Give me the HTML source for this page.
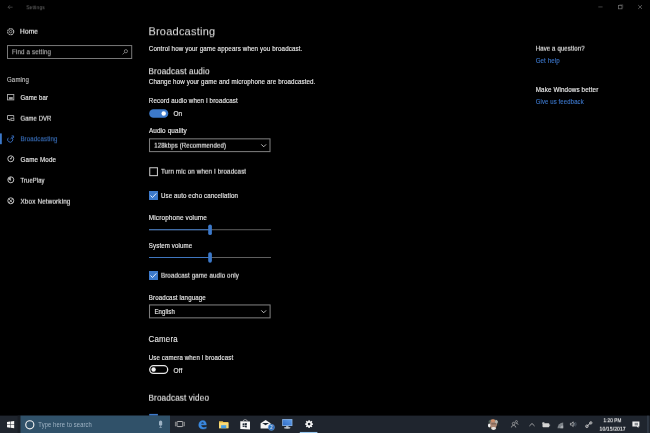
<!DOCTYPE html>
<html lang="en">
<head>
<meta charset="utf-8">
<title>Settings - Broadcasting</title>
<style>
html,body{margin:0;padding:0;background:#000;}
body{width:650px;height:433px;position:relative;overflow:hidden;font-family:"Liberation Sans",sans-serif;}
.t{position:absolute;left:0;top:0;white-space:pre;font-family:"Liberation Sans",sans-serif;transform-origin:0 0;will-change:transform;-webkit-text-stroke-color:currentColor;letter-spacing:0.02em;}
.abs{position:absolute;}
.box{position:absolute;box-sizing:border-box;}
svg{position:absolute;overflow:visible;}
</style>
</head>
<body>
<header>
<!-- title bar -->
<svg style="left:7px;top:4px" width="8" height="7" viewBox="0 0 8 7"><path d="M2.9 1.3 L1 3.2 L2.9 5.1 M1 3.2 H5.6" fill="none" stroke="#505050" stroke-width="0.75"/></svg>
<svg style="left:596px;top:2px" width="50" height="10" viewBox="596 2 50 10"><path d="M598.3 6.95 H602.6" stroke="#505050" stroke-width="0.8" fill="none"/><rect x="618.6" y="5.4" width="3.4" height="3.4" fill="none" stroke="#6c6c6c" stroke-width="0.8"/><path d="M619.6 5 V4.6 H622.8 V7.8 H622.4" fill="none" stroke="#4a4a4a" stroke-width="0.5"/><path d="M638.2 5.1 L642 8.9 M642 5.1 L638.2 8.9" stroke="#707070" stroke-width="0.75" fill="none"/></svg>
<span class="t" style="font-size:54px;line-height:82.58px;padding-left:2.19px;transform:translate(26px,3.25px) scale(0.09127,0.1) rotate(0.0001deg);color:#626262;-webkit-text-stroke-width:0.50px">Settings</span>
</header>
<nav>
<!-- sidebar -->
<svg style="left:6.8px;top:27.8px" width="7.4" height="7.4" viewBox="0 0 7.4 7.4"><circle cx="3.7" cy="3.7" r="3.05" fill="none" stroke="#b4b4b4" stroke-width="1.1" stroke-dasharray="1.9 0.5"/><circle cx="3.7" cy="3.7" r="1.25" fill="none" stroke="#b4b4b4" stroke-width="0.7"/></svg>
<svg style="left:6px;top:44px" width="128" height="16" viewBox="0 0 128 16"><rect x="1.5" y="1.55" width="124.2" height="12.95" fill="none" stroke="#787878" stroke-width="1"/></svg>
<svg style="left:122.2px;top:48.9px" width="6" height="6" viewBox="0 0 6 6"><circle cx="3.9" cy="2.2" r="1.6" fill="none" stroke="#a0a0a0" stroke-width="0.7"/><path d="M2.7 3.4 L0.6 5.4" stroke="#a0a0a0" stroke-width="0.7"/></svg>

<!-- nav icons -->
<svg style="left:6.8px;top:93.9px" width="7.4" height="6.4" viewBox="0 0 7.4 6.4"><rect x="0.5" y="0.5" width="6.3" height="5.4" fill="none" stroke="#ababab" stroke-width="0.9"/><rect x="1.9" y="3.1" width="3.9" height="2.4" fill="#a0a0a0"/></svg>
<svg style="left:6.9px;top:115px" width="7.4" height="6.4" viewBox="0 0 7.4 6.4"><path d="M3.4 4.5 H0.5 V0.5 H6.7 V2.6" fill="none" stroke="#b4b4b4" stroke-width="0.9"/><rect x="4" y="3.2" width="2.9" height="2.2" fill="none" stroke="#b4b4b4" stroke-width="0.8"/><path d="M2 5.7 H3.4" stroke="#a0a0a0" stroke-width="0.7"/></svg>
<svg style="left:0;top:133px" width="3" height="12" viewBox="0 0 3 12"><rect x="0" y="0.4" width="1.8" height="10.8" fill="#3c79ca"/></svg>
<svg style="left:6.9px;top:134.8px" width="7.4" height="7.8" viewBox="0 0 7.4 7.8"><circle cx="3.2" cy="4.6" r="2.6" fill="none" stroke="#3468b4" stroke-width="0.9" stroke-dasharray="12.4 4" transform="rotate(-55 3.2 4.6)"/><path d="M3.3 4.4 L6.4 1.2 M4.6 0.9 H6.6 V3" fill="none" stroke="#3468b4" stroke-width="0.9"/></svg>
<svg style="left:6.5px;top:155.4px" width="7.6" height="7.6" viewBox="0 0 7.6 7.6"><circle cx="3.8" cy="3.8" r="3" fill="none" stroke="#c0c0c0" stroke-width="1"/><path d="M3.8 3.8 L5 2" stroke="#c0c0c0" stroke-width="0.9"/><circle cx="3.8" cy="3.8" r="0.8" fill="#c0c0c0"/></svg>
<svg style="left:6.6px;top:176.4px" width="7.6" height="7.6" viewBox="0 0 7.6 7.6"><circle cx="3.8" cy="3.8" r="3" fill="none" stroke="#c0c0c0" stroke-width="1"/><path d="M1.2 3 L3.8 4.4 L3.4 1" fill="#c0c0c0" stroke="#c0c0c0" stroke-width="0.6"/></svg>
<svg style="left:6.6px;top:197.3px" width="7.6" height="7.6" viewBox="0 0 7.6 7.6"><circle cx="3.8" cy="3.8" r="3" fill="none" stroke="#c0c0c0" stroke-width="1"/><path d="M1.8 1.8 L5.8 6 M5.8 1.8 L1.8 6" stroke="#c0c0c0" stroke-width="0.9"/></svg>
<span class="t" style="font-size:70px;line-height:91.49px;padding-left:1.08px;transform:translate(20px,26.75px) scale(0.09271,0.1) rotate(0.0001deg);color:#f4f4f4;-webkit-text-stroke-width:1.50px">Home</span>
<span class="t" style="font-size:70px;line-height:91.49px;padding-left:0.00px;transform:translate(12px,47.25px) scale(0.08895,0.1) rotate(0.0001deg);color:#b8b8b8;-webkit-text-stroke-width:1.00px">Find a setting</span>
<span class="t" style="font-size:70px;line-height:91.49px;padding-left:0.00px;transform:translate(7px,75.00px) scale(0.08726,0.1) rotate(0.0001deg);color:#c8c8c8;-webkit-text-stroke-width:1.00px">Gaming</span>
<span class="t" style="font-size:70px;line-height:91.49px;padding-left:5.84px;transform:translate(20px,93.00px) scale(0.08566,0.1) rotate(0.0001deg);color:#e8e8e8;-webkit-text-stroke-width:1.50px">Game bar</span>
<span class="t" style="font-size:70px;line-height:91.49px;padding-left:5.97px;transform:translate(20px,113.75px) scale(0.08377,0.1) rotate(0.0001deg);color:#e8e8e8;-webkit-text-stroke-width:1.50px">Game DVR</span>
<span class="t" style="font-size:70px;line-height:91.49px;padding-left:4.58px;transform:translate(20px,134.25px) scale(0.08727,0.1) rotate(0.0001deg);color:#386eba;-webkit-text-stroke-width:1.50px">Broadcasting</span>
<span class="t" style="font-size:70px;line-height:91.49px;padding-left:6.72px;transform:translate(20px,155.00px) scale(0.08931,0.1) rotate(0.0001deg);color:#e8e8e8;-webkit-text-stroke-width:1.50px">Game Mode</span>
<span class="t" style="font-size:70px;line-height:91.49px;padding-left:5.99px;transform:translate(20px,175.75px) scale(0.08353,0.1) rotate(0.0001deg);color:#e8e8e8;-webkit-text-stroke-width:1.50px">TruePlay</span>
<span class="t" style="font-size:70px;line-height:91.49px;padding-left:5.50px;transform:translate(20px,196.75px) scale(0.09094,0.1) rotate(0.0001deg);color:#e8e8e8;-webkit-text-stroke-width:1.50px">Xbox Networking</span>
</nav>
<main>
<!-- toggle on -->
<svg style="left:149px;top:109px" width="19.6" height="9" viewBox="0 0 19.6 9"><rect x="0.2" y="0.2" width="19.1" height="8.5" rx="4.25" fill="#3c79ca"/><circle cx="14.7" cy="4.45" r="2.25" fill="#fff"/></svg>

<!-- dropdown 1 -->
<svg style="left:148px;top:137px" width="125" height="17" viewBox="0 0 125 17"><rect x="1.5" y="1.85" width="120.5" height="12.75" fill="none" stroke="#7c7c7c" stroke-width="1.05"/></svg>
<svg style="left:260.7px;top:143.8px" width="5.6" height="3.6" viewBox="0 0 5.6 3.6"><path d="M0.3 0.4 L2.7 2.8 L5.1 0.4" fill="none" stroke="#dcdcdc" stroke-width="0.85"/></svg>

<!-- checkbox unchecked -->
<svg style="left:149px;top:166.6px" width="9.2" height="9.4" viewBox="0 0 9.2 9.4"><rect x="0.75" y="0.75" width="7.7" height="7.9" fill="none" stroke="#c6c6c6" stroke-width="1.05"/></svg>
<!-- checkbox checked -->
<div class="abs" style="left:149.2px;top:191.1px;width:8.7px;height:8.7px;background:#3c79ca"></div>
<svg style="left:149.2px;top:191.1px" width="8.7" height="8.7" viewBox="0 0 8.7 8.7"><path d="M1.5 4.5 L3.5 6.5 L7.3 2.4" fill="none" stroke="#eaf2ff" stroke-width="0.95"/></svg>

<!-- slider 1 -->
<svg style="left:148px;top:223px" width="125" height="14" viewBox="0 0 125 14"><rect x="1" y="6.3" width="122" height="0.9" fill="#6a6a6a"/><rect x="1" y="6.3" width="61" height="0.9" fill="#3c79ca"/><rect x="60.2" y="1.5" width="3.7" height="10.5" rx="1.85" fill="#3c79ca"/></svg>
<!-- slider 2 -->
<svg style="left:148px;top:251px" width="125" height="14" viewBox="0 0 125 14"><rect x="1" y="6" width="122" height="0.9" fill="#6a6a6a"/><rect x="1" y="6" width="61" height="0.9" fill="#3c79ca"/><rect x="60.2" y="1.2" width="3.7" height="10.5" rx="1.85" fill="#3c79ca"/></svg>

<!-- checkbox checked 2 -->
<div class="abs" style="left:149.2px;top:270.9px;width:8.7px;height:8.7px;background:#3c79ca"></div>
<svg style="left:149.2px;top:270.9px" width="8.7" height="8.7" viewBox="0 0 8.7 8.7"><path d="M1.5 4.5 L3.5 6.5 L7.3 2.4" fill="none" stroke="#eaf2ff" stroke-width="0.95"/></svg>

<!-- dropdown 2 -->
<svg style="left:148px;top:303px" width="125" height="17" viewBox="0 0 125 17"><rect x="1.5" y="1.95" width="120.6" height="12.9" fill="none" stroke="#7c7c7c" stroke-width="1.05"/></svg>
<svg style="left:260.7px;top:310.3px" width="5.6" height="3.6" viewBox="0 0 5.6 3.6"><path d="M0.3 0.4 L2.7 2.8 L5.1 0.4" fill="none" stroke="#dcdcdc" stroke-width="0.85"/></svg>

<!-- toggle off -->
<svg style="left:149px;top:365.4px" width="19.6" height="9" viewBox="0 0 19.6 9"><rect x="0.7" y="0.7" width="18" height="7.7" rx="3.85" fill="none" stroke="#e8e8e8" stroke-width="1.25"/><circle cx="4.6" cy="4.55" r="2.2" fill="#f0f0f0"/></svg>

<!-- cut-off checkbox -->
<svg style="left:0;top:410px" width="650" height="8" viewBox="0 0 650 8"><rect x="149.2" y="3.9" width="8.7" height="3" fill="#3c79ca"/></svg>
<span class="t" style="font-size:115px;line-height:160.30px;padding-left:4.18px;transform:translate(148px,23.25px) scale(0.09576,0.1) rotate(0.0001deg);color:#e6e6e6;-webkit-text-stroke-width:0.00px">Broadcasting</span>
<span class="t" style="font-size:70px;line-height:91.49px;padding-left:9.00px;transform:translate(148px,44.00px) scale(0.08885,0.1) rotate(0.0001deg);color:#e8e8e8;-webkit-text-stroke-width:1.50px">Control how your game appears when you broadcast.</span>
<span class="t" style="font-size:86px;line-height:120.40px;padding-left:5.29px;transform:translate(148px,65.25px) scale(0.09448,0.1) rotate(0.0001deg);color:#e8e8e8;-webkit-text-stroke-width:1.00px">Broadcast audio</span>
<span class="t" style="font-size:70px;line-height:91.49px;padding-left:9.03px;transform:translate(148px,77.00px) scale(0.08858,0.1) rotate(0.0001deg);color:#e8e8e8;-webkit-text-stroke-width:1.50px">Change how your game and microphone are broadcasted.</span>
<span class="t" style="font-size:70px;line-height:91.49px;padding-left:9.07px;transform:translate(148px,96.00px) scale(0.08818,0.1) rotate(0.0001deg);color:#e8e8e8;-webkit-text-stroke-width:1.50px">Record audio when I broadcast</span>
<span class="t" style="font-size:70px;line-height:91.49px;padding-left:5.45px;transform:translate(173px,109.00px) scale(0.09178,0.1) rotate(0.0001deg);color:#e8e8e8;-webkit-text-stroke-width:1.50px">On</span>
<span class="t" style="font-size:70px;line-height:91.49px;padding-left:9.92px;transform:translate(148px,126.00px) scale(0.09075,0.1) rotate(0.0001deg);color:#e8e8e8;-webkit-text-stroke-width:1.50px">Audio quality</span>
<span class="t" style="font-size:70px;line-height:91.49px;padding-left:2.32px;transform:translate(154px,140.75px) scale(0.08615,0.1) rotate(0.0001deg);color:#e8e8e8;-webkit-text-stroke-width:1.50px">128kbps (Recommended)</span>
<span class="t" style="font-size:70px;line-height:91.49px;padding-left:10.11px;transform:translate(160px,166.75px) scale(0.08900,0.1) rotate(0.0001deg);color:#e8e8e8;-webkit-text-stroke-width:1.50px">Turn mic on when I broadcast</span>
<span class="t" style="font-size:70px;line-height:91.49px;padding-left:10.23px;transform:translate(160px,191.00px) scale(0.08794,0.1) rotate(0.0001deg);color:#e8e8e8;-webkit-text-stroke-width:1.50px">Use auto echo cancellation</span>
<span class="t" style="font-size:70px;line-height:91.49px;padding-left:8.72px;transform:translate(148px,213.00px) scale(0.09175,0.1) rotate(0.0001deg);color:#e8e8e8;-webkit-text-stroke-width:1.50px">Microphone volume</span>
<span class="t" style="font-size:70px;line-height:91.49px;padding-left:9.13px;transform:translate(148px,241.00px) scale(0.08763,0.1) rotate(0.0001deg);color:#e8e8e8;-webkit-text-stroke-width:1.50px">System volume</span>
<span class="t" style="font-size:70px;line-height:91.49px;padding-left:10.19px;transform:translate(160px,270.75px) scale(0.08833,0.1) rotate(0.0001deg);color:#e8e8e8;-webkit-text-stroke-width:1.50px">Broadcast game audio only</span>
<span class="t" style="font-size:70px;line-height:91.49px;padding-left:9.07px;transform:translate(148px,293.00px) scale(0.08817,0.1) rotate(0.0001deg);color:#e8e8e8;-webkit-text-stroke-width:1.50px">Broadcast language</span>
<span class="t" style="font-size:70px;line-height:91.49px;padding-left:4.67px;transform:translate(154px,307.00px) scale(0.08572,0.1) rotate(0.0001deg);color:#e8e8e8;-webkit-text-stroke-width:1.50px">English</span>
<span class="t" style="font-size:86px;line-height:120.40px;padding-left:6.51px;transform:translate(148px,333.00px) scale(0.09221,0.1) rotate(0.0001deg);color:#e8e8e8;-webkit-text-stroke-width:1.00px">Camera</span>
<span class="t" style="font-size:70px;line-height:91.49px;padding-left:9.16px;transform:translate(148px,353.00px) scale(0.08734,0.1) rotate(0.0001deg);color:#e8e8e8;-webkit-text-stroke-width:1.50px">Use camera when I broadcast</span>
<span class="t" style="font-size:70px;line-height:91.49px;padding-left:5.39px;transform:translate(173px,366.00px) scale(0.09275,0.1) rotate(0.0001deg);color:#e8e8e8;-webkit-text-stroke-width:1.50px">Off</span>
<span class="t" style="font-size:86px;line-height:120.40px;padding-left:5.30px;transform:translate(148px,391.75px) scale(0.09426,0.1) rotate(0.0001deg);color:#e8e8e8;-webkit-text-stroke-width:1.00px">Broadcast video</span>
</main>
<aside>
<span class="t" style="font-size:70px;line-height:91.49px;padding-left:8.10px;transform:translate(535px,43.75px) scale(0.08642,0.1) rotate(0.0001deg);color:#e8e8e8;-webkit-text-stroke-width:1.50px">Have a question?</span>
<span class="t" style="font-size:70px;line-height:91.49px;padding-left:8.00px;transform:translate(535px,56.00px) scale(0.08745,0.1) rotate(0.0001deg);color:#3a73c4;-webkit-text-stroke-width:1.50px">Get help</span>
<span class="t" style="font-size:70px;line-height:91.49px;padding-left:7.81px;transform:translate(535px,85.00px) scale(0.08965,0.1) rotate(0.0001deg);color:#e8e8e8;-webkit-text-stroke-width:1.50px">Make Windows better</span>
<span class="t" style="font-size:70px;line-height:91.49px;padding-left:8.19px;transform:translate(535px,97.00px) scale(0.08543,0.1) rotate(0.0001deg);color:#3a73c4;-webkit-text-stroke-width:1.50px">Give us feedback</span>
</aside>
<footer>
<!-- taskbar -->
<svg style="left:0;top:414px" width="650" height="19" viewBox="0 0 650 19"><rect x="0" y="1.6" width="650" height="18" fill="#1f252e"/><rect x="17.6" y="1.6" width="3" height="18" fill="#191e26"/><rect x="20.5" y="1.6" width="149.5" height="18" fill="#305169"/></svg>
<svg style="left:6.9px;top:420.8px" width="7.2" height="7.2" viewBox="0 0 7.4 7.4"><path d="M0 1 L3.2 0.55 V3.5 H0 Z M3.7 0.5 L7.4 0 V3.5 H3.7 Z M0 4 H3.2 V6.9 L0 6.4 Z M3.7 4 H7.4 V7.4 L3.7 6.95 Z" fill="#f4f4f4"/></svg>
<svg style="left:24.5px;top:419.6px" width="9.6" height="9.6" viewBox="0 0 9.6 9.6"><circle cx="4.8" cy="4.8" r="4.05" fill="none" stroke="#f0f0f0" stroke-width="1.15"/></svg>
<svg style="left:158px;top:420px" width="6" height="9" viewBox="0 0 6 9"><rect x="1.0" y="0.4" width="3.2" height="5.4" rx="1.6" fill="#9db2c4"/><path d="M2.6 5.6 V7.4 M1.4 7.5 H3.8" fill="none" stroke="#8aa2b6" stroke-width="0.8"/></svg>
<!-- task view -->
<svg style="left:175.4px;top:421.3px" width="9.8" height="6.2" viewBox="0 0 9.8 6.2"><rect x="2" y="0.5" width="5.8" height="5.1" rx="0.7" fill="none" stroke="#bcbcbc" stroke-width="0.95"/><path d="M1.3 1.1 H0.4 V5 H1.3 M8.5 1.1 H9.4 V5 H8.5" fill="none" stroke="#a8a8a8" stroke-width="0.75"/></svg>
<!-- edge -->
<svg style="left:198px;top:419.9px" width="9" height="9.2" viewBox="0 0 8.6 9"><path d="M0.6 4.6 C0.8 1.8 2.6 0.5 4.6 0.5 C7 0.5 8.2 2.4 8.1 5 H2.9 C3 6.6 4.3 7.4 5.6 7.4 C6.6 7.4 7.4 7.1 8 6.7 V8.2 C7.2 8.7 6.2 8.9 5 8.9 C2.4 8.9 0.4 7.2 0.6 4.6 Z M2.9 3.7 H5.8 C5.7 2.6 5.1 2.1 4.3 2.1 C3.6 2.1 3 2.7 2.9 3.7 Z" fill="#3a88de" fill-rule="evenodd" stroke="#3a88de" stroke-width="0.35"/></svg>
<!-- folder -->
<svg style="left:218.9px;top:421px" width="9.4" height="7.4" viewBox="0 0 9.4 7.4"><path d="M0 0.2 H3.6 L4.4 1.1 H9.4 V7.2 H0 Z" fill="#f0c64e"/><rect x="0" y="1.9" width="9.4" height="5.3" fill="#f8da78"/><rect x="2.1" y="4.2" width="5.2" height="3" fill="#48a0e4"/></svg>
<!-- store -->
<svg style="left:239.6px;top:419px" width="10.4" height="11" viewBox="0 0 10.4 11"><path d="M3 2.4 Q3.2 0.6 5.2 0.6 Q7.2 0.6 7.4 2.4" fill="none" stroke="#e0e0e0" stroke-width="0.6"/><path d="M0.3 2.2 L10 2.4 L10 10.5 L0.3 10 Z" fill="#f6f6f6"/><path d="M2.6 4.6 L4.5 4.3 V6 H2.6 Z M4.9 4.25 L6.8 3.95 V6 H4.9 Z M2.6 6.4 H4.5 V8.1 L2.6 7.8 Z M4.9 6.4 H6.8 V8.45 L4.9 8.15 Z" fill="#1d2632"/></svg>
<!-- mail -->
<svg style="left:260px;top:419px" width="16" height="13" viewBox="0 0 16 13"><path d="M0.6 4.2 L5.6 1 L10.6 4.2 V9.6 H0.6 Z" fill="#f4f4f4"/><path d="M2.2 4.1 H9 L5.6 6.3 Z" fill="#1d2632"/><circle cx="11.4" cy="8.3" r="3.1" fill="#2c6cb8" stroke="#6fa4e0" stroke-width="0.5"/><text x="11.4" y="9.9" font-family="Liberation Sans, sans-serif" font-size="4.6" font-weight="bold" text-anchor="middle" fill="#c4d8f0">2</text></svg>
<!-- monitor -->
<svg style="left:282px;top:419px" width="10.6" height="10" viewBox="0 0 10.6 10"><defs><linearGradient id="mg" x1="0" y1="1" x2="1" y2="0"><stop offset="0" stop-color="#2f6cc8"/><stop offset="1" stop-color="#5f9ce4"/></linearGradient></defs><rect x="0.2" y="0.1" width="10.2" height="6.9" fill="#8fb8e8"/><rect x="0.9" y="0.8" width="8.8" height="5.5" fill="url(#mg)"/><rect x="4.1" y="7" width="2.4" height="1.3" fill="#a8b0b8"/><ellipse cx="5.3" cy="8.8" rx="3.3" ry="0.9" fill="#c4ccd4"/></svg>
<!-- gear -->
<svg style="left:304.7px;top:420.15px" width="8.2" height="8.2" viewBox="0 0 8.2 8.2"><path d="M3.24 1.28 L3.40 0.16 L4.80 0.16 L4.96 1.28 L5.49 1.50 L6.39 0.82 L7.38 1.81 L6.70 2.71 L6.92 3.24 L8.04 3.40 L8.04 4.80 L6.92 4.96 L6.70 5.49 L7.38 6.39 L6.39 7.38 L5.49 6.70 L4.96 6.92 L4.80 8.04 L3.40 8.04 L3.24 6.92 L2.71 6.70 L1.81 7.38 L0.82 6.39 L1.50 5.49 L1.28 4.96 L0.16 4.80 L0.16 3.40 L1.28 3.24 L1.50 2.71 L0.82 1.81 L1.81 0.82 L2.71 1.50 Z M2.75 4.10 a1.35 1.35 0 1 0 2.7 0 a1.35 1.35 0 1 0 -2.7 0 Z" fill="#f6f6f6" fill-rule="evenodd"/></svg>
<svg style="left:299px;top:430px" width="20" height="3" viewBox="0 0 20 3"><rect x="0.8" y="1.95" width="17.6" height="1.4" fill="#98c8f0"/></svg>

<!-- tray -->
<svg style="left:486px;top:417px" width="15" height="15" viewBox="486 417 15 15"><defs><clipPath id="av"><circle cx="493.3" cy="424.5" r="5.7"/></clipPath><filter id="avb" x="-20%" y="-20%" width="140%" height="140%"><feGaussianBlur stdDeviation="0.6"/></filter></defs><g clip-path="url(#av)"><rect x="486" y="417" width="15" height="15" fill="#2c3234"/><g filter="url(#avb)"><ellipse cx="490" cy="421" rx="1.8" ry="1.8" fill="#566860"/><ellipse cx="493.4" cy="424.4" rx="3.6" ry="4.6" fill="#a98672"/><ellipse cx="492.9" cy="420.6" rx="2.2" ry="1.3" fill="#d08e68"/><ellipse cx="496.5" cy="421.6" rx="1.4" ry="2.2" fill="#b4b4ac"/><ellipse cx="489.2" cy="425.4" rx="1.2" ry="2" fill="#f4f4f4"/><ellipse cx="493.6" cy="428.5" rx="2.4" ry="1.4" fill="#e6e2de"/><rect x="491.3" y="423.4" width="4.8" height="0.9" fill="#6c544a"/><ellipse cx="497.6" cy="427.4" rx="1.2" ry="1.8" fill="#1c2228"/></g></g></svg>
<svg style="left:511px;top:420.4px" width="8" height="8" viewBox="0 0 8 8"><circle cx="2.6" cy="3.6" r="1.3" fill="none" stroke="#c8c8c8" stroke-width="0.6"/><path d="M0.4 7.5 Q0.4 5.4 2.6 5.4 Q4.8 5.4 4.8 7.5" fill="none" stroke="#c8c8c8" stroke-width="0.6"/><circle cx="5.4" cy="1.6" r="1.05" fill="none" stroke="#c0c0c0" stroke-width="0.55"/><path d="M4.9 3.3 Q7.1 3 7.2 4.9" fill="none" stroke="#c0c0c0" stroke-width="0.55"/></svg>
<svg style="left:529.1px;top:423px" width="6" height="3.4" viewBox="0 0 6 3.4"><path d="M0.4 3 L3 0.5 L5.6 3" fill="none" stroke="#c8c8c8" stroke-width="0.75"/></svg>
<svg style="left:542px;top:421.5px" width="8.4" height="5.8" viewBox="0 0 8.4 5.8"><rect x="0.5" y="1.3" width="6.8" height="3.9" rx="0.7" fill="#d4d4d4"/><rect x="7.3" y="2.5" width="0.8" height="1.5" fill="#c0c0c0"/><rect x="0.3" y="0.3" width="2.2" height="1.8" rx="0.5" fill="#c8c8c8"/></svg>
<svg style="left:556.8px;top:421.6px" width="6.6" height="6.6" viewBox="0 0 6.6 6.6"><path d="M6.2 0.6 V6.2 H0.5 A5.7 5.7 0 0 1 6.2 0.6 Z" fill="#7c8288"/><path d="M6.2 3.4 V6.2 H3.4 A2.8 2.8 0 0 1 6.2 3.4 Z" fill="#a8acb0"/></svg>
<svg style="left:569.6px;top:421.4px" width="7" height="6.4" viewBox="0 0 7 6.4"><path d="M0.4 2.3 H1.6 L3.2 0.8 V5.6 L1.6 4.1 H0.4 Z" fill="none" stroke="#d0d0d0" stroke-width="0.7"/><path d="M4.4 1.8 Q5.3 3.2 4.4 4.6" fill="none" stroke="#8c98a4" stroke-width="0.7"/><path d="M5.5 1 Q6.9 3.2 5.5 5.4" fill="none" stroke="#5c6874" stroke-width="0.6"/></svg>
<svg style="left:585.4px;top:420.7px" width="7.6" height="7.2" viewBox="0 0 7.6 7.2"><path d="M1.4 5.9 L6.2 1.3" stroke="#d4d4d4" stroke-width="1.0" fill="none"/><circle cx="1.9" cy="5.3" r="1.3" fill="none" stroke="#d4d4d4" stroke-width="0.8"/><circle cx="5.8" cy="1.9" r="1.2" fill="none" stroke="#d4d4d4" stroke-width="0.8"/></svg>
<svg style="left:631.8px;top:420.6px" width="8" height="7.4" viewBox="0 0 8 7.4"><path d="M0.4 0.4 H7.4 V5.6 H6.4 V7 L4.8 5.6 H0.4 Z" fill="#f0f0f0"/><path d="M2.6 1.8 H6 V4.4 H2.6 Z" fill="#8a8e94"/></svg>
<svg style="left:646px;top:414px" width="4" height="19" viewBox="0 0 4 19"><rect x="1.4" y="1.6" width="1.1" height="18" fill="#3a4654"/></svg>
<span class="t" style="font-size:70px;line-height:91.49px;padding-left:3.61px;transform:translate(38px,420.00px) scale(0.08309,0.1) rotate(0.0001deg);color:#9fb3c4;-webkit-text-stroke-width:0.00px">Type here to search</span>
<span class="t" style="font-size:56px;line-height:81.19px;padding-left:6.01px;transform:translate(603px,416.25px) scale(0.08315,0.1) rotate(0.0001deg);color:#f0f0f0;-webkit-text-stroke-width:1.25px">1:20 PM</span>
<span class="t" style="font-size:56px;line-height:81.19px;padding-left:6.70px;transform:translate(599px,424.75px) scale(0.08954,0.1) rotate(0.0001deg);color:#f0f0f0;-webkit-text-stroke-width:1.25px">10/15/2017</span>
</footer>
</body>
</html>
